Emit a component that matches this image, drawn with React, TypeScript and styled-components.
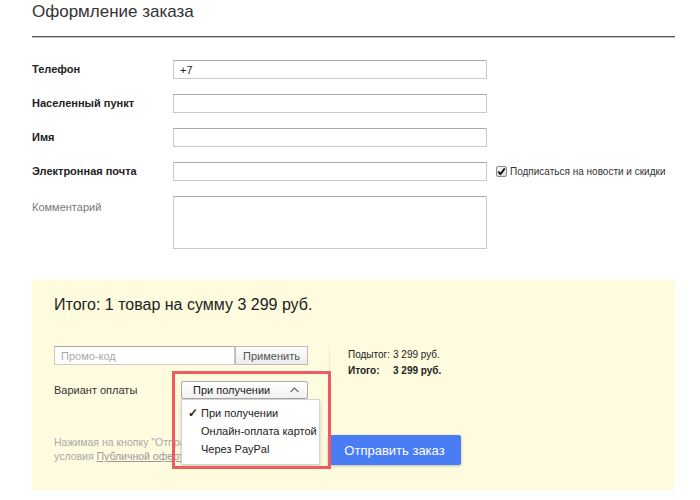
import React from 'react';
import styled, { createGlobalStyle } from 'styled-components';

const GlobalStyle = createGlobalStyle`
  html, body {
    margin: 0;
    padding: 0;
    background: #fff;
    font-family: "Liberation Sans", Arial, sans-serif;
    color: #222;
  }
`;

const Page = styled.div`
  width: 643px;
  padding: 0 25px 10px 32px;
`;

const Title = styled.h1`
  margin: 0;
  padding-top: 1px;
  font-size: 17px;
  line-height: 22px;
  font-weight: normal;
  color: #333;
`;

const Divider = styled.div`
  margin-top: 13px;
  height: 1px;
  background: #5c5c5c;
  border-bottom: 1px solid #c4c4c4;
`;

const Form = styled.div`
  display: flex;
  flex-direction: column;
  gap: 15px;
  margin-top: 22px;
`;

const Row = styled.div<{ $top?: boolean }>`
  display: flex;
  align-items: ${({ $top }) => ($top ? 'flex-start' : 'center')};
`;

const Label = styled.label<{ $muted?: boolean }>`
  width: 141px;
  flex-shrink: 0;
  font-size: 11px;
  font-weight: ${({ $muted }) => ($muted ? 'normal' : 'bold')};
  color: ${({ $muted }) => ($muted ? '#777' : '#222')};
  padding-top: ${({ $muted }) => ($muted ? '5px' : '0')};
  margin-top: ${({ $muted }) => ($muted ? '0' : '-2px')};
`;

const Input = styled.input`
  box-sizing: border-box;
  width: 314px;
  height: 19px;
  margin: 0;
  padding: 0 6px;
  border: 1px solid #c9c9c9;
  border-top-color: #aaa;
  font-family: inherit;
  font-size: 11px;
  color: #222;
  background: #fff;
  outline: none;
`;

const TextArea = styled.textarea`
  box-sizing: border-box;
  width: 314px;
  height: 53px;
  margin: 0;
  padding: 4px 6px;
  border: 1px solid #c9c9c9;
  border-top-color: #aaa;
  resize: none;
  font-family: inherit;
  outline: none;
`;

const Subscribe = styled.div`
  display: flex;
  align-items: center;
  gap: 3px;
  margin-left: 9px;
  font-size: 10px;
  color: #333;
`;

const CheckBox = styled.span`
  box-sizing: border-box;
  width: 11px;
  height: 11px;
  border: 1px solid #8a8a8a;
  border-radius: 2px;
  background: linear-gradient(#f4f4f4, #dcdcdc);
  display: flex;
  align-items: center;
  justify-content: center;
`;

const Summary = styled.div`
  margin-top: 31px;
  background: #fffbdf;
  padding: 14px 0 25px 22px;
`;

const SummaryTitle = styled.h2`
  margin: 0;
  font-size: 16px;
  line-height: 22px;
  font-weight: normal;
  color: #222;
`;

const Grid = styled.div`
  display: grid;
  grid-template-columns: 276px 1fr;
  margin-top: 30px;
`;

const LeftCol = styled.div`
  display: flex;
  flex-direction: column;
  border-right: 1px solid #ecebd8;
  padding-bottom: 2px;
`;

const PromoRow = styled.div`
  display: flex;
`;

const PromoInput = styled(Input)`
  width: 181px;
  &::placeholder {
    color: #aaa;
  }
`;

const PromoButton = styled.button`
  box-sizing: border-box;
  width: 73px;
  height: 19px;
  margin: 0;
  padding: 0;
  border: 1px solid #b9b9b9;
  background: linear-gradient(#fdfdfd, #ececec);
  font-family: inherit;
  font-size: 11px;
  color: #555;
`;

const PayRow = styled.div`
  display: flex;
  align-items: center;
  margin-top: 16px;
`;

const PayLabel = styled.span`
  width: 127px;
  font-size: 11px;
  color: #333;
`;

const SelectWrap = styled.div`
  position: relative;
`;

const SelectBox = styled.div`
  box-sizing: border-box;
  width: 127px;
  height: 18px;
  padding: 0 8px 0 11px;
  border: 1px solid #a9a9a9;
  border-radius: 2px;
  background: linear-gradient(#fff, #f1f1f1);
  display: flex;
  align-items: center;
  justify-content: space-between;
  font-size: 11px;
  color: #222;
`;

const Menu = styled.ul`
  position: absolute;
  top: 18px;
  left: 0;
  z-index: 3;
  box-sizing: border-box;
  width: 139px;
  margin: 0;
  padding: 4px 0 6px;
  list-style: none;
  background: #fff;
  border: 1px solid #d4d4d4;
  box-shadow: 0 2px 4px rgba(0, 0, 0, 0.18);
`;

const MenuItem = styled.li`
  position: relative;
  height: 18px;
  line-height: 18px;
  padding-left: 19px;
  font-size: 11px;
  color: #222;
`;

const Tick = styled.span`
  position: absolute;
  left: 6px;
  top: 0;
  font-size: 12px;
  font-weight: bold;
`;

const Highlight = styled.div`
  position: absolute;
  left: -9px;
  top: -10px;
  width: 159px;
  height: 98px;
  box-sizing: border-box;
  border: 3px solid #ef5b5e;
  z-index: 4;
  pointer-events: none;
`;

const Totals = styled.div`
  padding: 3px 0 0 18px;
  display: grid;
  grid-template-columns: 45px auto;
  row-gap: 5px;
  align-content: start;
  font-size: 10px;
  color: #222;
`;

const Strong = styled.span`
  font-weight: bold;
`;

const BottomRow = styled.div`
  display: grid;
  grid-template-columns: 276px 1fr;
  margin-top: 34px;
  align-items: start;
`;

const Legal = styled.p`
  margin: 0;
  width: 272px;
  font-size: 10.5px;
  line-height: 14px;
  color: #a9a9a9;
`;

const LegalLink = styled.span`
  text-decoration: underline;
  color: #999;
`;

const SubmitButton = styled.button`
  width: 133px;
  height: 30px;
  border: none;
  border-radius: 2px;
  background: #4a7cf4;
  color: #fff;
  font-family: inherit;
  font-size: 13px;
  box-shadow: 0 1px 3px rgba(0, 0, 0, 0.25);
  margin-left: -2px;
`;

const fields = ['Телефон', 'Населенный пункт', 'Имя'];

export default function App() {
  return (
    <>
      <GlobalStyle />
      <Page>
        <Title>Оформление заказа</Title>
        <Divider />
        <Form>
          {fields.map((f) => (
            <Row key={f}>
              <Label>{f}</Label>
              <Input defaultValue={f === 'Телефон' ? '+7' : ''} />
            </Row>
          ))}
          <Row>
            <Label>Электронная почта</Label>
            <Input />
            <Subscribe>
              <CheckBox>
                <svg width="9" height="9" viewBox="0 0 9 9">
                  <path d="M1.2 4.6 L3.5 7 L7.8 1.4" fill="none" stroke="#111" strokeWidth="1.8" />
                </svg>
              </CheckBox>
              Подписаться на новости и скидки
            </Subscribe>
          </Row>
          <Row $top>
            <Label $muted>Комментарий</Label>
            <TextArea />
          </Row>
        </Form>

        <Summary>
          <SummaryTitle>Итого: 1 товар на сумму 3 299 руб.</SummaryTitle>
          <Grid>
            <LeftCol>
              <PromoRow>
                <PromoInput placeholder="Промо-код" />
                <PromoButton>Применить</PromoButton>
              </PromoRow>
              <PayRow>
                <PayLabel>Вариант оплаты</PayLabel>
                <SelectWrap>
                  <SelectBox>
                    При получении
                    <svg width="9" height="6" viewBox="0 0 9 6">
                      <polyline points="0.5,5 4.5,1 8.5,5" fill="none" stroke="#666" strokeWidth="1.1" />
                    </svg>
                  </SelectBox>
                  <Menu>
                    <MenuItem>
                      <Tick>✓</Tick>
                      При получении
                    </MenuItem>
                    <MenuItem>Онлайн-оплата картой</MenuItem>
                    <MenuItem>Через PayPal</MenuItem>
                  </Menu>
                  <Highlight />
                </SelectWrap>
              </PayRow>
            </LeftCol>
            <Totals>
              <span>Подытог:</span>
              <span>3 299 руб.</span>
              <Strong>Итого:</Strong>
              <Strong>3 299 руб.</Strong>
            </Totals>
          </Grid>
          <BottomRow>
            <Legal>
              Нажимая на кнопку "Отправить заказ", вы принимаете условия{' '}
              <LegalLink>Публичной оферты</LegalLink>
            </Legal>
            <SubmitButton>Отправить заказ</SubmitButton>
          </BottomRow>
        </Summary>
      </Page>
    </>
  );
}
